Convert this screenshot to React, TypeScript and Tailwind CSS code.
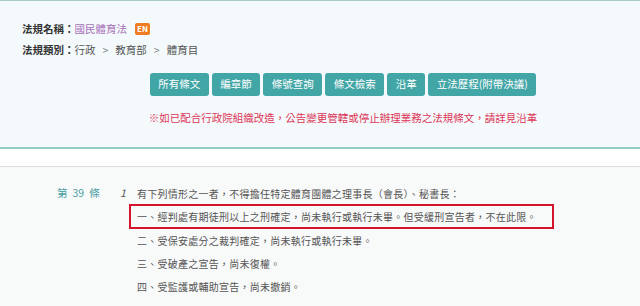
export default function App() {
  const buttons = ["所有條文", "編章節", "條號查詢", "條文檢索", "沿革", "立法歷程(附帶決議)"];

  return (
    <div
      className="w-full h-[306px] overflow-hidden text-[10.5px] bg-[#f8f9f9]"
      style={{ fontFamily: '"Noto Sans CJK TC", "Noto Sans", sans-serif' }}
    >
      {/* Law header */}
      <div className="bg-[#f4fafb] border-t border-[#a9c8c8] border-b-2 border-b-[#8fcdc6] h-[149px] pt-[17px]">
        <div className="pl-[22px]">
          <div className="h-[21px] flex items-center">
            <span className="font-bold text-[#333]">法規名稱：</span>
            <span className="text-[#a86fb9]">國民體育法</span>
            <span className="ml-[8px] w-[15px] h-[12px] rounded-[2px] bg-[#ef7c21] text-white text-[8px] font-bold flex items-center justify-center leading-none">
              EN
            </span>
          </div>
          <div className="h-[21px] flex items-center text-[#555]">
            <span className="font-bold text-[#333]">法規類別：</span>
            <span>行政</span>
            <span className="mx-[7px] text-[#777]">&gt;</span>
            <span>教育部</span>
            <span className="mx-[7px] text-[#777]">&gt;</span>
            <span>體育目</span>
          </div>
        </div>

        <div className="pl-[46px] mt-[13px] flex justify-center gap-[3px]">
          {buttons.map((b) => (
            <button
              key={b}
              className="h-[23px] px-[8.5px] rounded-[3px] bg-[#42a6a6] text-white leading-none"
            >
              {b}
            </button>
          ))}
        </div>

        <div className="pl-[46px] mt-[14px] h-[16px] flex items-center justify-center text-[#dc3558]">
          ※如已配合行政院組織改造，公告變更管轄或停止辦理業務之法規條文，請詳見沿革
        </div>
      </div>

      {/* Spacer band */}
      <div className="h-[18px] bg-white border-b border-[#dcdede]" />

      {/* Article content */}
      <div className="pt-[15px] pl-[57px] flex text-[#555]">
        <div className="w-[63px] h-[22px] flex items-center gap-[5px] text-[#4a9fa3]">
          <span>第</span>
          <span>39</span>
          <span>條</span>
        </div>
        <div className="w-[17px] h-[22px] flex items-center italic text-[#555]">1</div>
        <div className="flex flex-col text-[10px] tracking-[0.25px]">
          <div className="h-[22px] flex items-center">
            有下列情形之一者，不得擔任特定體育團體之理事長（會長）、秘書長：
          </div>
          <div className="-ml-[8px] w-[425px] h-[25px] border-2 border-[#d4142e] pl-[6px] flex items-center">
            一、經判處有期徒刑以上之刑確定，尚未執行或執行未畢。但受緩刑宣告者，不在此限。
          </div>
          <div className="h-[23px] flex items-center">二、受保安處分之裁判確定，尚未執行或執行未畢。</div>
          <div className="h-[23px] flex items-center">三、受破產之宣告，尚未復權。</div>
          <div className="h-[23px] flex items-center">四、受監護或輔助宣告，尚未撤銷。</div>
        </div>
      </div>
    </div>
  );
}
